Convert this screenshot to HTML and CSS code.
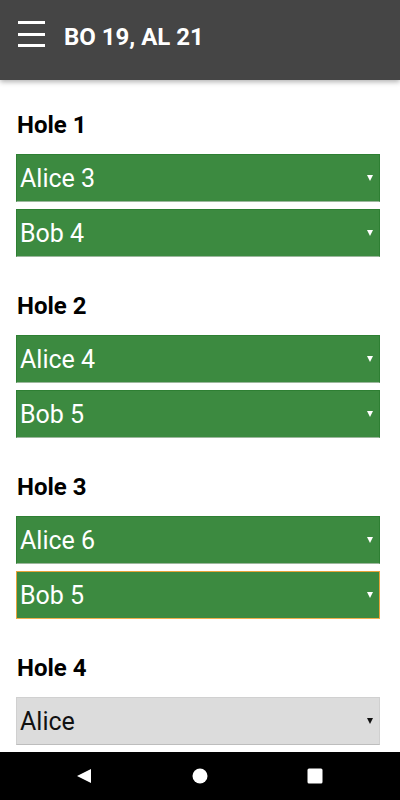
FILE: index.html
```html
<!DOCTYPE html>
<html>
<head>
<meta charset="utf-8">
<link rel="stylesheet" href="styles.css">
</head>
<body>
<header class="appbar">
  <div class="menu"><span></span><span></span><span></span></div>
  <h1 class="title">BO 19, AL 21</h1>
</header>
<main class="content">
  <section class="hole">
    <h2>Hole 1</h2>
    <div class="sel done"><span>Alice 3</span><i class="arrow"></i></div>
    <div class="sel done"><span>Bob 4</span><i class="arrow"></i></div>
  </section>
  <section class="hole">
    <h2>Hole 2</h2>
    <div class="sel done"><span>Alice 4</span><i class="arrow"></i></div>
    <div class="sel done"><span>Bob 5</span><i class="arrow"></i></div>
  </section>
  <section class="hole">
    <h2>Hole 3</h2>
    <div class="sel done"><span>Alice 6</span><i class="arrow"></i></div>
    <div class="sel done focus"><span>Bob 5</span><i class="arrow"></i></div>
  </section>
  <section class="hole">
    <h2>Hole 4</h2>
    <div class="sel"><span>Alice</span><i class="arrow"></i></div>
  </section>
</main>
<nav class="navbar">
  <svg width="16" height="16" viewBox="0 0 16 16"><path d="M15 1 L15 15 L1 8 Z" fill="#fff"/></svg>
  <svg width="16" height="16" viewBox="0 0 16 16"><circle cx="8" cy="8" r="7.5" fill="#fff"/></svg>
  <svg width="16" height="16" viewBox="0 0 16 16"><rect x="0.5" y="0.5" width="15" height="15" rx="1.5" fill="#fff"/></svg>
</nav>
</body>
</html>
```
FILE: styles.css
```css
html, body {
  margin: 0;
  padding: 0;
  background: #fff;
  font-family: Roboto, "Noto Sans", sans-serif;
}
body {
  width: 400px;
  height: 800px;
  overflow: hidden;
  position: relative;
}
.appbar {
  height: 80px;
  box-sizing: border-box;
  background: #454545;
  display: flex;
  align-items: flex-start;
  box-shadow: 0 2px 5px rgba(0,0,0,0.3);
  position: relative;
  z-index: 2;
}
.menu {
  margin: 21px 0 0 18px;
  width: 27px;
  height: 26px;
  display: flex;
  flex-direction: column;
  justify-content: space-between;
}
.menu span {
  display: block;
  height: 3px;
  background: #fff;
}
.title {
  margin: 23px 0 0 19px;
  color: #fff;
  font-size: 24px;
  font-weight: 700;
  line-height: 28px;
}
.content {
  padding: 33px 20px 0 16px;
}
.hole {
  display: flex;
  flex-direction: column;
  gap: 7px;
  margin-bottom: 37px;
}
.hole h2 {
  margin: 0 0 10px 1px;
  font-size: 24px;
  line-height: 24px;
  font-weight: 700;
  color: #000;
}
.sel {
  height: 48px;
  box-sizing: border-box;
  display: flex;
  align-items: center;
  justify-content: space-between;
  padding: 0 6px 0 3px;
  background: #dcdcdc;
  border: 1px solid #d0d0d0;
  border-bottom-color: #bdbdbd;
  font-size: 25px;
  color: #111;
}
.sel.done {
  background: #3c8a40;
  border-color: #2e7f33;
  border-bottom-color: #9cb79d;
  color: #fff;
}
.sel.focus {
  border: 1px solid #e8a33a;
  border-bottom-color: #f0b050;
}
.arrow {
  width: 0;
  height: 0;
  border-left: 3.5px solid transparent;
  border-right: 3.5px solid transparent;
  border-top: 6px solid #111;
}
.sel.done .arrow {
  border-top-color: #fff;
}
.navbar {
  position: absolute;
  left: 0;
  right: 0;
  bottom: 0;
  height: 48px;
  background: #000;
  display: flex;
  align-items: center;
  justify-content: space-between;
  padding: 0 77px 0 76px;
  z-index: 3;
}
```
